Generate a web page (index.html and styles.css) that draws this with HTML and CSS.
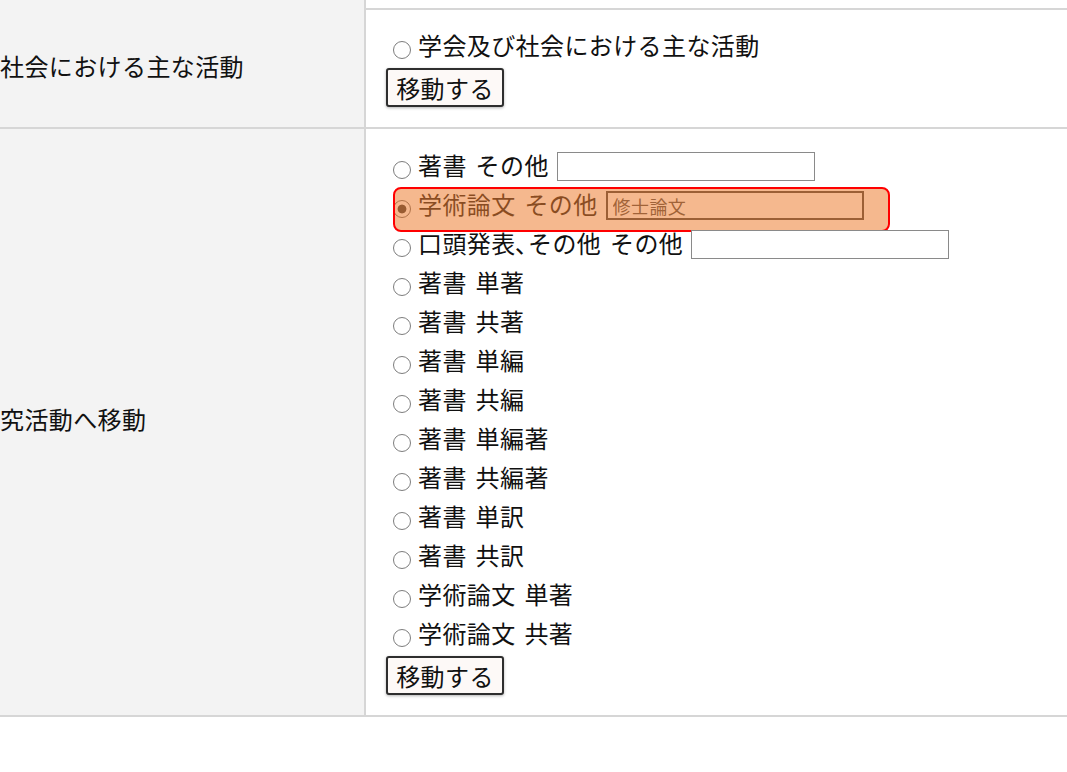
FILE: index.html
```html
<!DOCTYPE html>
<html lang="ja">
<head>
<meta charset="utf-8">
<title>移動</title>
<link rel="stylesheet" href="styles.css">
</head>
<body>
<div class="table">
  <div class="row row-top">
    <div class="label"></div>
    <div class="cell"></div>
  </div>
  <div class="row">
    <div class="label">社会における主な活動</div>
    <div class="cell">
      <label class="opt"><input type="radio" name="a" class="radio">学会及び社会における主な活動</label>
      <button class="btn" type="button">移動する</button>
    </div>
  </div>
  <div class="row">
    <div class="label">究活動へ移動</div>
    <div class="cell cell-list">
      <label class="opt"><input type="radio" name="b" class="radio">著書 その他<input type="text" class="txt"></label>
      <label class="opt hl"><input type="radio" name="b" class="radio" checked>学術論文 その他<input type="text" class="txt filled" value="修士論文"><span class="mark"></span></label>
      <label class="opt"><input type="radio" name="b" class="radio">口頭発表､その他 その他<input type="text" class="txt"></label>
      <label class="opt"><input type="radio" name="b" class="radio">著書 単著</label>
      <label class="opt"><input type="radio" name="b" class="radio">著書 共著</label>
      <label class="opt"><input type="radio" name="b" class="radio">著書 単編</label>
      <label class="opt"><input type="radio" name="b" class="radio">著書 共編</label>
      <label class="opt"><input type="radio" name="b" class="radio">著書 単編著</label>
      <label class="opt"><input type="radio" name="b" class="radio">著書 共編著</label>
      <label class="opt"><input type="radio" name="b" class="radio">著書 単訳</label>
      <label class="opt"><input type="radio" name="b" class="radio">著書 共訳</label>
      <label class="opt"><input type="radio" name="b" class="radio">学術論文 単著</label>
      <label class="opt"><input type="radio" name="b" class="radio">学術論文 共著</label>
      <button class="btn" type="button">移動する</button>
    </div>
  </div>
</div>
</body>
</html>
```

FILE: styles.css
```css
html, body {
  margin: 0;
  padding: 0;
  background: #ffffff;
}
body {
  font-family: "Noto Sans CJK JP", "Noto Sans", sans-serif;
  font-size: 24px;
  color: #111;
  letter-spacing: 0.4px;
  word-spacing: 3px;
}
.table {
  display: flex;
  flex-direction: column;
}
.row {
  display: grid;
  grid-template-columns: 366px 1fr;
  border-bottom: 2px solid #d6d6d6;
}
.row-top {
  height: 8px;
}
.label {
  background: #f3f3f3;
  border-right: 2px solid #d6d6d6;
  display: flex;
  align-items: center;
  white-space: nowrap;
  overflow: hidden;
  line-height: 1;
  padding-bottom: 6px;
}
.cell {
  display: flex;
  flex-direction: column;
  align-items: flex-start;
  padding: 15px 0 20px 20px;
}
.cell-list {
  padding-top: 16px;
}
.opt {
  position: relative;
  display: flex;
  align-items: center;
  height: 39px;
  line-height: 39px;
  white-space: nowrap;
}
.radio {
  -webkit-appearance: none;
  appearance: none;
  width: 18px;
  height: 18px;
  margin: 10px 7px 0 7px;
  border: 1.6px solid #7d7d7d;
  border-radius: 50%;
  background: #fff;
  box-sizing: border-box;
  flex: none;
}
.radio:checked {
  border-color: #666;
  background: radial-gradient(circle, #333 0 4px, #fff 4.8px);
}
.txt {
  width: 258px;
  height: 29px;
  box-sizing: border-box;
  margin: 4px 0 0 8px;
  border: 1.5px solid #8a8a8a;
  background: #fff;
  font-family: "Noto Sans CJK JP", sans-serif;
  font-size: 18px;
  letter-spacing: 0.4px;
  padding: 0 6px;
  color: #333;
}
.txt.filled {
  border: 2.5px solid #3a3a3a;
  padding: 0 5px;
  color: #444;
}
.mark {
  position: absolute;
  left: 7px;
  top: 3px;
  width: 497px;
  height: 45px;
  box-sizing: border-box;
  border: 2.5px solid #ff0000;
  border-radius: 8px;
  background: rgba(237, 125, 49, 0.55);
  pointer-events: none;
}
.btn {
  margin-top: 4px;
  width: 118px;
  height: 39px;
  box-sizing: border-box;
  border: 2px solid #2e2e2e;
  border-radius: 3px;
  background: #fdf9f7;
  box-shadow: 0 1px 3px rgba(0, 0, 0, 0.3);
  font-family: "Noto Sans CJK JP", sans-serif;
  font-size: 24px;
  letter-spacing: 0.4px;
  line-height: 1;
  padding: 0;
  color: #111;
}
```
